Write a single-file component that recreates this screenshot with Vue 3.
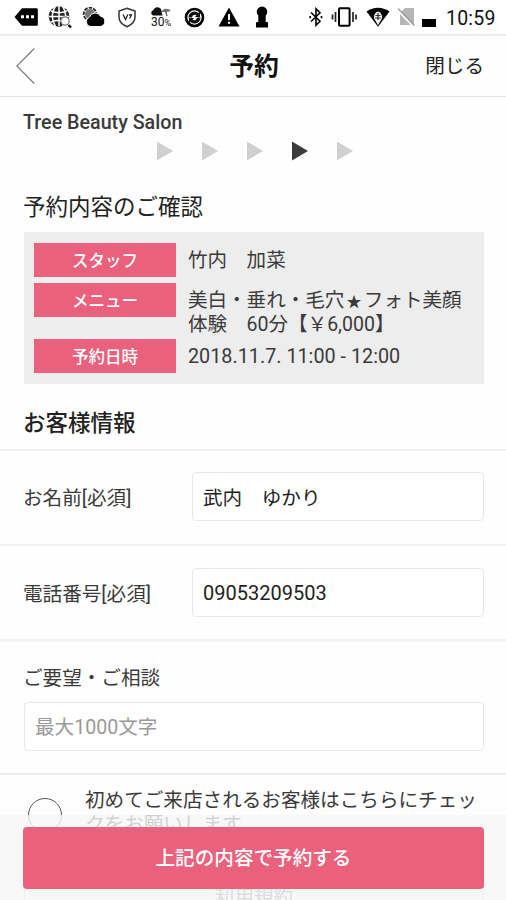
<script setup>
import { ref } from 'vue'

const steps = [1, 2, 3, 4, 5]
const currentStep = 4
const name = ref('武内　ゆかり')
const phone = ref('09053209503')
const request = ref('')
const firstVisit = ref(false)
const details = [
  { label: 'スタッフ', lines: [['竹内　加菜']] },
  { label: 'メニュー', lines: [['美白・垂れ・毛穴', '★', 'フォト美顔'], ['体験　60分【￥6,000】']] },
  { label: '予約日時', lines: [['2018.11.7. 11:00 - 12:00']] },
]
</script>

<template>
  <div class="screen">
    <div class="status">
      <div class="notices">
        <svg width="24" height="20" viewBox="0 0 24 20">
          <path d="M8 1.200h14.500q1.300 0 1.300 1.300v15q0 1.300-1.300 1.300H8L.5 10z" fill="#000" />
          <path d="M7 8.300h3v3H7zM12 8.300h3v3h-3zM17 8.300h3v3h-3z" fill="#fff" />
        </svg>
        <svg width="24" height="24" viewBox="0 0 24 24">
          <circle cx="11" cy="11.500" r="10.300" fill="#222" />
          <path d="M11 1v20M1 11.500h20M3 6Q11 9.500 19 6M3 17Q11 13.500 19 17M7.500 1Q1 11 7.500 21.500M14.500 1Q21 11 14.500 21.500" fill="none" stroke="#fff" stroke-width="1.500" />
          <circle cx="17" cy="16" r="4.200" fill="#fff" stroke="#777" stroke-width="1.200" />
          <path d="M20.500 20l2.500 2.500" stroke="#111" stroke-width="2.400" />
        </svg>
        <svg width="23" height="20" viewBox="0 0 23 20">
          <circle cx="8" cy="7" r="5" fill="#777" />
          <circle cx="8" cy="7" r="6.300" fill="none" stroke="#222" stroke-width="1.800" stroke-dasharray="3.400 1.200" />
          <path d="M8 19.500a5 5 0 0 1-.5-9.500 6 6 0 0 1 11-.8 5.200 5.200 0 0 1-.5 10.300z" fill="#000" stroke="#fff" stroke-width="1" />
        </svg>
        <svg width="20" height="21" viewBox="0 0 20 21">
          <path d="M10 1.300L18 4v6q0 6.500-8 9.700Q2 16.500 2 10V4z" fill="#fff" stroke="#333" stroke-width="1.500" />
          <path d="M6 7.500l2.600 5 2.200-5M12 8h2.500l-2 3.500" fill="none" stroke="#222" stroke-width="1.300" />
        </svg>
        <div class="weather">
          <svg width="22" height="11" viewBox="0 0 22 11">
            <path d="M3 9.500a2.800 2.800 0 0 1 .2-5.300A4.500 4.500 0 0 1 11 3l1.500 6.500z" fill="#111" />
            <path d="M11.500 6a5.200 4.600 0 0 1 9.500-1l-4.500 1z" fill="#777" />
            <path d="M15.500 5l1.500 5" stroke="#555" stroke-width="1.200" />
          </svg>
          <span>30<small>%</small></span>
        </div>
        <svg width="21" height="21" viewBox="0 0 21 21">
          <circle cx="10.500" cy="10.500" r="8.500" fill="#fff" stroke="#000" stroke-width="2.600" />
          <path d="M4.500 10.500a6 6 0 0 1 10-4.500l1.500-1.200V10h-5l1.500-1.800a3 3 0 0 0-4.500 2.300zM16.500 10.500a6 6 0 0 1-10 4.500L5 16.200V11h5l-1.500 1.800a3 3 0 0 0 4.500-2.300z" fill="#111" />
        </svg>
        <svg width="22" height="20" viewBox="0 0 22 20">
          <path d="M11 .5L21.500 19.500H.5z" fill="#000" />
          <path d="M10 7h2v6h-2zM10 14.700h2v2.100h-2z" fill="#fff" />
        </svg>
        <svg width="14" height="22" viewBox="0 0 14 22">
          <path d="M3.300 9.500A5.300 5.300 0 1 1 10.700 9.500V16H12q1 0 1 1v4.500H1V17q0-1 1-1h1.300z" fill="#000" />
        </svg>
      </div>
      <div class="signals">
        <svg width="14" height="20" viewBox="0 0 14 20">
          <path d="M2 5.500l9 8.700-4 4V1.800l4 4-9 8.700" fill="none" stroke="#000" stroke-width="1.600" />
          <path d="M1.200 9v2.200M12.500 9v2.200" stroke="#000" stroke-width="1.700" />
        </svg>
        <svg width="27" height="20" viewBox="0 0 27 20">
          <rect x="8" y="1.200" width="10.600" height="17.600" rx="1" fill="none" stroke="#000" stroke-width="2" />
          <path d="M4.500 5v10M22 5v10M1.500 7.500v5M25 7.500v5" stroke="#222" stroke-width="1.700" />
        </svg>
        <svg width="24" height="20" viewBox="0 0 24 20">
          <path d="M12 19.800L.5 4.500Q12-3 23.500 4.500z" fill="#000" />
          <path d="M12 4.500q4 1 4.200 6.500L12 18.200 7.800 11Q8 5.500 12 4.500z" fill="#eee" />
          <path d="M12 6v7M9 11h6M9.500 8.500h5" stroke="#333" stroke-width="1.200" fill="none" />
        </svg>
        <svg width="18" height="20" viewBox="0 0 18 20">
          <path d="M7 1h9v17H2V6z" fill="#b5b5b5" />
          <path d="M0 3.500l16.500 17" stroke="#fff" stroke-width="2" />
          <path d="M0 1.500l16.500 17" stroke="#999" stroke-width="1.300" />
        </svg>
        <span class="battery"></span>
        <span class="clock">10:59</span>
      </div>
    </div>

    <header class="header">
      <svg class="back" width="20" height="37" viewBox="0 0 20 37">
        <path d="M18.300 .5L.8 18 18.300 35.500" fill="none" stroke="#777" stroke-width="1.100" />
      </svg>
      <h1>予約</h1>
      <span class="close">閉じる</span>
    </header>

    <main>
      <div class="shop">Tree Beauty Salon</div>
      <div class="steps">
        <svg v-for="s in steps" :key="s" width="16" height="20" viewBox="0 0 16 20" :class="{ on: s === currentStep }">
          <path d="M0 .5L16 10 0 19.500z" />
        </svg>
      </div>

      <h2 class="confirm-title">予約内容のご確認</h2>
      <dl class="summary">
        <div v-for="d in details" :key="d.label" class="detail">
          <dt>{{ d.label }}</dt>
          <dd>
            <div v-for="(line, i) in d.lines" :key="i">
              <span v-for="part in line" :key="part" :class="{ star: part === '★' }">{{ part }}</span>
            </div>
          </dd>
        </div>
      </dl>

      <h2 class="customer-title">お客様情報</h2>
      <label class="row"><span>お名前[必須]</span><input v-model="name" type="text"></label>
      <label class="row phone"><span>電話番号[必須]</span><input v-model="phone" type="tel"></label>
      <label class="request">
        <span>ご要望・ご相談</span>
        <input v-model="request" type="text" placeholder="最大1000文字">
      </label>
      <label class="first">
        <input v-model="firstVisit" type="checkbox">
        <span>初めてご来店されるお客様はこちらにチェックをお願いします</span>
      </label>
      <div class="terms">利用規約</div>
    </main>

    <footer class="footer">
      <button type="button">上記の内容で予約する</button>
    </footer>
  </div>
</template>

<style>
body {
  background: #fff;
  overflow: hidden;
}
</style>

<style scoped>
* {
  box-sizing: border-box;
}

.screen {
  position: relative;
  height: 900px;
  overflow: hidden;
  background: #fefefe;
  color: #3a3a3a;
  font-family: Roboto, "Noto Sans CJK JP", sans-serif;
  font-size: 19.6px;
  line-height: 24px;
}

.status {
  display: flex;
  height: 36px;
  padding: 0 11px 0 9px;
  justify-content: space-between;
  border-bottom: 2px solid #ececec;
  background: #fff;
}

.notices {
  display: grid;
  grid-template-columns: repeat(8, 33.8px);
  place-items: center;
}

.weather {
  display: flex;
  flex-direction: column;
  align-items: center;
  padding-top: 1px;
  color: #111;
  font-size: 12px;
  line-height: 11px;
}

.weather small {
  font-size: 9px;
}

.signals {
  display: grid;
  grid-template-columns: 14px 27px 24px 18px 14px 49px;
  column-gap: 8px;
  align-items: center;
}

.battery {
  width: 14px;
  height: 8px;
  margin: 11px 0 0 -2px;
  background: #000;
}

.clock {
  padding-top: 3px;
  color: #111;
  font-size: 19.5px;
  letter-spacing: .2px;
}

.header {
  display: grid;
  grid-template-columns: 80px 1fr 80px;
  align-items: center;
  height: 61px;
  padding: 0 22px 0 16px;
  border-bottom: 1px solid #e2e2e2;
}

h1 {
  margin: 0;
  padding: 2px 0 0 8px;
  color: #111;
  font-size: 24.8px;
  font-weight: 700;
  text-align: center;
}

.close {
  padding-top: 2px;
  color: #222;
  text-align: right;
}

.shop {
  height: 38px;
  padding: 14px 23px 0;
  font-size: 19.7px;
  font-weight: 500;
}

.steps {
  display: flex;
  gap: 29px;
  margin: 6px 0 0 157px;
  fill: #d0d0d0;
}

.steps .on {
  fill: #3c3c3c;
}

h2 {
  margin: 0;
  padding: 0 23px;
  color: #222;
  font-size: 22.5px;
  font-weight: 500;
  line-height: 30px;
}

.confirm-title {
  height: 30px;
  padding-top: 1px;
  margin-top: 30px;
  font-weight: 400;
}

.summary {
  display: flex;
  flex-direction: column;
  gap: 6px;
  height: 152px;
  margin: 11px 22px 0 24px;
  padding: 11px 10px;
  background: #ededed;
}

.detail {
  display: flex;
  gap: 12px;
}

dt {
  width: 142px;
  height: 34px;
  padding-top: 2px;
  background: #e9617d;
  color: #fff;
  font-size: 16.5px;
  font-weight: 500;
  line-height: 34px;
  text-align: center;
}

dd {
  height: 34px;
  margin: 0;
  padding-top: 6px;
  white-space: nowrap;
  font-size: 19.55px;
  line-height: 23.5px;
}

.star {
  display: inline-block;
  width: 19.6px;
  font-size: 15px;
  line-height: 20px;
  text-align: center;
}

.detail:nth-child(2) dd {
  height: 50px;
}

.detail:last-child dd {
  font-size: 19.8px;
}

.customer-title {
  height: 65px;
  padding-top: 24px;
}

.row {
  display: grid;
  grid-template-columns: 169px 1fr;
  align-items: center;
  height: 95px;
  padding: 0 22px 0 23px;
  border-top: 2px solid #f0f0f0;
}

.row span {
  padding-top: 2px;
}

input[type="text"],
input[type="tel"] {
  width: 100%;
  height: 49px;
  padding: 0 10px;
  border: 1px solid #e8e8e8;
  border-radius: 4px;
  outline: 0;
  background: #fff;
  color: #222;
  font: inherit;
}

.row input {
  position: relative;
  top: -1px;
}

input[type="tel"] {
  font-size: 20px;
}

input::placeholder {
  color: #999;
  opacity: 1;
}

.phone {
  padding-top: 2px;
}

.request {
  display: block;
  height: 134px;
  padding: 25px 22px 0 24px;
  border-top: 3px solid #f2f2f2;
}

.request span {
  display: block;
  height: 35px;
  margin-left: -1px;
}

.request input {
  padding-top: 2px;
}

.first {
  display: grid;
  grid-template-columns: 61px 396px;
  align-items: start;
  height: 112px;
  padding: 14px 0 0 24px;
  border-top: 2px solid #ededed;
  line-height: 23.5px;
}

input[type="checkbox"] {
  width: 34px;
  height: 34px;
  margin: 9px 0 0 4px;
  border: 1px solid #555;
  border-radius: 50%;
  appearance: none;
}

.terms {
  height: 60px;
  margin: 0 22px 0 24px;
  border: 1px solid #ccc;
  background: #f7f8fc;
  color: #777;
  line-height: 24px;
  text-align: center;
}

.footer {
  position: absolute;
  right: 0;
  bottom: 0;
  left: 0;
  height: 85px;
  padding: 12px 22px 0 23px;
  background: rgba(246, 246, 246, .8);
}

button {
  width: 100%;
  height: 62px;
  padding: 2px 0 0;
  border: 0;
  border-radius: 4px;
  background: #e9617d;
  color: #fff;
  font: inherit;
  font-weight: 500;
}
</style>
